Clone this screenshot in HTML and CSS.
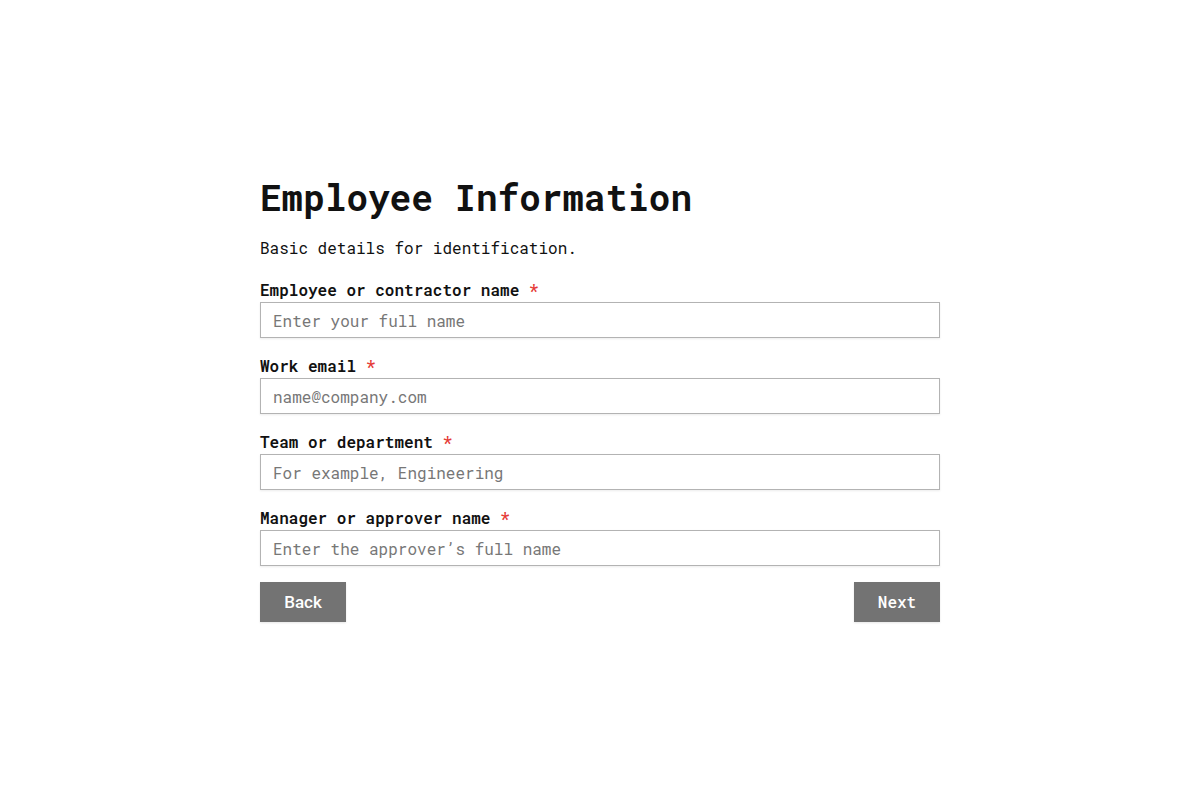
FILE: index.html
```html
<!DOCTYPE html>
<html lang="en">
<head>
<meta charset="utf-8">
<title>Employee Information</title>
<link rel="stylesheet" href="styles.css">
</head>
<body>
<main class="page">
  <form class="form">
    <h1 class="title">Employee Information</h1>
    <p class="subtitle">Basic details for identification.</p>
    <div class="field">
      <label class="label" for="name">Employee or contractor name <span class="req">*</span></label>
      <input class="input" id="name" type="text" placeholder="Enter your full name">
    </div>
    <div class="field">
      <label class="label" for="email">Work email <span class="req">*</span></label>
      <input class="input" id="email" type="email" placeholder="name@company.com">
    </div>
    <div class="field">
      <label class="label" for="team">Team or department <span class="req">*</span></label>
      <input class="input" id="team" type="text" placeholder="For example, Engineering">
    </div>
    <div class="field">
      <label class="label" for="manager">Manager or approver name <span class="req">*</span></label>
      <input class="input" id="manager" type="text" placeholder="Enter the approver’s full name">
    </div>
    <div class="actions">
      <button class="btn btn-back" type="button">Back</button>
      <button class="btn btn-next" type="button">Next</button>
    </div>
  </form>
</main>
</body>
</html>
```
FILE: styles.css
```css
* { box-sizing: border-box; }
html, body { margin: 0; padding: 0; background: #fff; }
body {
  font-family: "Roboto Mono", "DejaVu Sans Mono", "Liberation Mono", monospace;
  color: #111;
}
.page {
  min-height: 100vh;
  display: flex;
  align-items: center;
  justify-content: center;
}
.form {
  width: 680px;
  display: flex;
  flex-direction: column;
}
.title {
  margin: 0 0 20px;
  font-size: 36px;
  line-height: 38px;
  font-weight: 700;
  color: #111;
}
.subtitle {
  margin: 0 0 18px;
  font-size: 16px;
  line-height: 24px;
}
.field {
  display: flex;
  flex-direction: column;
  margin-bottom: 16px;
}
.label {
  font-size: 16px;
  line-height: 24px;
  font-weight: 600;
  color: #111;
}
.req { color: #e53935; }
.input {
  height: 36px;
  width: 100%;
  border: 1px solid #b3b3b3;
  border-radius: 0;
  padding: 0 12px;
  font-family: inherit;
  font-size: 16px;
  color: #111;
  background: #fff;
  box-shadow: 0 1px 2px rgba(0, 0, 0, 0.08);
  outline: none;
}
.input::placeholder { color: #777; }
.actions {
  display: flex;
  justify-content: space-between;
}
.btn {
  height: 40px;
  width: 86px;
  border: none;
  border-radius: 0;
  background: #737373;
  color: #fff;
  font-size: 16px;
  font-weight: 500;
  padding: 0;
  box-shadow: 0 1px 2px rgba(0, 0, 0, 0.1);
}
.btn-back { font-family: Roboto, "Liberation Sans", sans-serif; font-size: 17px; }
.btn-next { font-family: "Roboto Mono", "DejaVu Sans Mono", monospace; padding-bottom: 2px; }
```
